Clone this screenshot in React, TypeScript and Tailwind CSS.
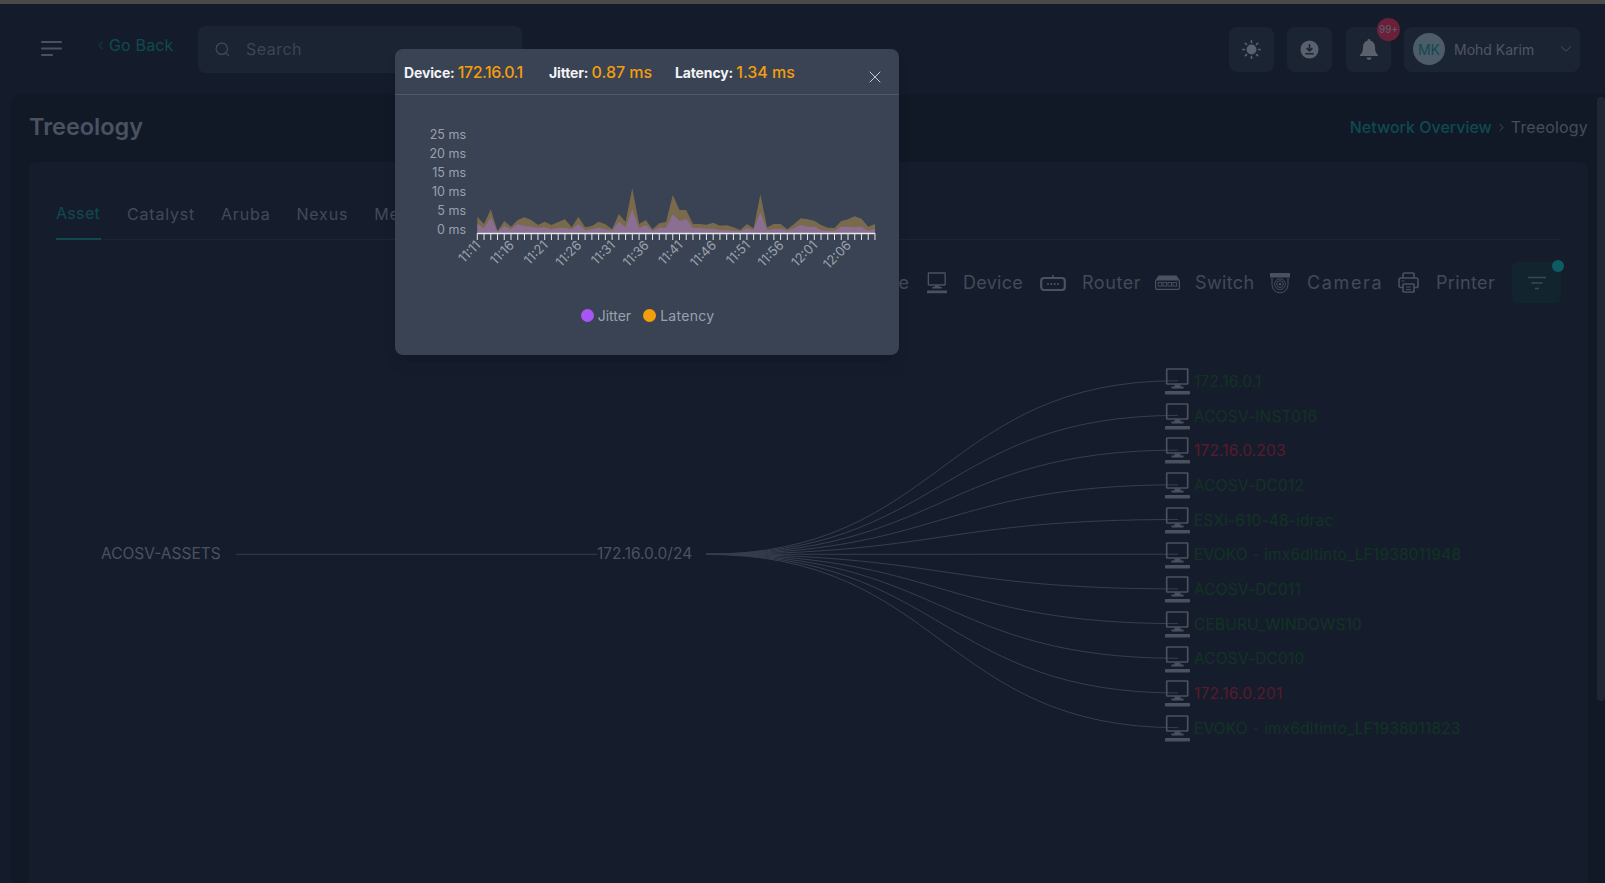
import { ChevronDown, ChevronLeft, ChevronRight, Search, X } from "lucide-react";

const latencyTops = [140,162,118,183,153,170,150,142,150,165,155,165,156,148,172,140,172,168,155,163,178,132,155,55,162,150,178,160,156,75,120,120,162,162,164,158,167,166,172,180,162,175,73,172,162,162,178,162,145,148,152,165,173,174,153,148,139,146,170,162];
const jitterTops = [162,175,142,185,168,178,162,168,170,173,172,178,174,174,178,163,180,178,173,178,182,155,172,118,175,165,182,173,173,133,153,146,174,174,176,176,180,180,182,184,175,180,127,180,177,176,182,175,165,170,170,180,182,182,170,170,172,170,182,176];

const X0 = 82.3;
const STEP = 6.74;
const BASE = 138;
const toY = (v: number) => 75 + v / 3;
const area = (tops: number[]) =>
  `M${X0},${BASE} ` + tops.map((v, i) => `L${(X0 + i * STEP).toFixed(1)},${toY(v).toFixed(1)}`).join(" ") + ` L${(X0 + 59 * STEP).toFixed(1)},${BASE} Z`;

const timeLabels = ["11:11","11:16","11:21","11:26","11:31","11:36","11:41","11:46","11:51","11:56","12:01","12:06"];
const yLabels = [["25 ms",39],["20 ms",58],["15 ms",77],["10 ms",96],["5 ms",115],["0 ms",134.5]] as const;

const nodes = [
  ["172.16.0.1","g"],["ACOSV-INST016","g"],["172.16.0.203","r"],["ACOSV-DC012","g"],["ESXi-610-48-idrac","g"],
  ["EVOKO - imx6dltinto_LF1938011948","g"],["ACOSV-DC011","g"],["CEBURU_WINDOWS10","g"],["ACOSV-DC010","g"],["172.16.0.201","r"],["EVOKO - imx6dltinto_LF1938011823","g"],
] as const;

const FONT = "font-['Inter','Liberation_Sans',sans-serif]";

function Monitor({ width = 25, height = 27 }: { width?: number; height?: number }) {
  return (
    <svg viewBox="0 0 25 27" width={width} height={height} fill="none">
      <rect x="1.7" y="1" width="21" height="15" rx="0.5" stroke="#4a515f" strokeWidth="1.7" />
      <path d="M9.5 16.5h6v2h3v2h-12v-2h3z" fill="#4a515f" />
      <rect x="0" y="23" width="25" height="3.4" rx="0.6" fill="#4a515f" />
    </svg>
  );
}

function RouterIcon() {
  return (
    <svg viewBox="0 0 26 16" width="26" height="16" fill="none">
      <path d="M13 0v3" stroke="#4a515f" strokeWidth="1.6" />
      <rect x="1.2" y="3" width="23.6" height="12" rx="3" stroke="#4a515f" strokeWidth="2.2" />
      <g fill="#4a515f"><circle cx="8" cy="9" r="1.1" /><circle cx="11.3" cy="9" r="1.1" /><circle cx="14.7" cy="9" r="1.1" /><circle cx="18" cy="9" r="1.1" /></g>
    </svg>
  );
}

function SwitchIcon() {
  return (
    <svg viewBox="0 0 25 15" width="25" height="15" fill="none">
      <path d="M3.5 0.5h18l3 4.5H.5z" fill="#4a515f" />
      <rect x="0.6" y="5" width="23.8" height="9.4" rx="1.4" stroke="#4a515f" strokeWidth="1.2" />
      <g stroke="#4a515f" strokeWidth="0.9"><rect x="3.2" y="7.5" width="3.6" height="3.6" /><rect x="8" y="7.5" width="3.6" height="3.6" /><rect x="13" y="7.5" width="3.6" height="3.6" /><rect x="18" y="7.5" width="3.6" height="3.6" /></g>
    </svg>
  );
}

function CameraIcon() {
  return (
    <svg viewBox="0 0 20 20" width="20" height="20" fill="none">
      <rect x="0" y="0" width="20" height="4.6" rx="0.6" fill="#4a515f" />
      <path d="M2 5v6.5a8 8.3 0 0 0 16 0V5" stroke="#4a515f" strokeWidth="1" />
      <circle cx="10" cy="11.2" r="5.4" stroke="#4a515f" strokeWidth="0.9" />
      <circle cx="10" cy="11.2" r="3.4" stroke="#4a515f" strokeWidth="0.9" />
      <circle cx="10" cy="11.2" r="1.3" fill="#4a515f" />
    </svg>
  );
}

function PrinterIcon() {
  return (
    <svg viewBox="0 0 21 21" width="21" height="21" fill="none" stroke="#4a515f" strokeWidth="1.6">
      <path d="M5 6V2.2A1.2 1.2 0 0 1 6.2 1h8.6A1.2 1.2 0 0 1 16 2.2V6" />
      <path d="M5 15.5H2.8A1.8 1.8 0 0 1 1 13.7V7.8A1.8 1.8 0 0 1 2.8 6h15.4A1.8 1.8 0 0 1 20 7.8v5.9a1.8 1.8 0 0 1-1.8 1.8H16" />
      <rect x="5" y="12" width="11" height="8" rx="0.8" />
      <path d="M8 15h5M8 17.5h5M3.5 9h3" strokeWidth="1.1" />
    </svg>
  );
}

function LegendItem({ label, icon, labelClass }: { label: string; icon: React.ReactNode; labelClass: string }) {
  return (
    <div className="flex items-center">
      {icon}
      <span className={`text-[18px] text-[#434a58] ${labelClass}`}>{label}</span>
    </div>
  );
}

export default function App() {
  const sx = 706, ex = 1178, sy = 554.3;
  return (
    <div className={`relative flex flex-col h-[883px] w-[1605px] overflow-hidden bg-[#141c2b] ${FONT}`}>
      <div className="h-1 shrink-0 bg-[#4a4a4a]" />

      <header className="flex h-[90px] shrink-0 items-center">
        <svg viewBox="0 0 21 16" width="21" height="16" className="ml-[41px]" fill="none" stroke="#4a515f" strokeWidth="2" strokeLinecap="round">
          <path d="M1 1h19M1 7.5h19M1 14h10" />
        </svg>
        <div className="ml-[32px] mb-2 flex w-[104px] items-center text-[16px] text-[#0f4a50] tracking-[0.01em]">
          <ChevronLeft size={13} strokeWidth={1.8} className="mr-[2px]" />
          Go Back
        </div>
        <div className="flex h-[47px] w-[324px] items-center rounded-lg bg-[#1b2433] pl-4">
          <Search size={17} strokeWidth={1.7} className="text-[#434a58]" />
          <span className="ml-[15px] text-[16px] text-[#3d4553] tracking-[0.03em]">Search</span>
        </div>

        <div className="ml-auto mr-[25px] flex items-center">
          <button className="flex h-[45px] w-[45px] items-center justify-center rounded-lg bg-[#1b2433]">
            <svg viewBox="0 0 20 20" width="19" height="19" fill="#5a606c">
              <circle cx="10" cy="10" r="5.2" />
              <g stroke="#5a606c" strokeWidth="1.8" strokeLinecap="round">
                <path d="M10 .9v1.6M10 17.5v1.6M.9 10h1.6M17.5 10h1.6M3.6 3.6l1.1 1.1M15.3 15.3l1.1 1.1M3.6 16.4l1.1-1.1M15.3 4.7l1.1-1.1" />
              </g>
            </svg>
          </button>
          <button className="ml-[13px] flex h-[45px] w-[45px] items-center justify-center rounded-lg bg-[#1b2433]">
            <svg viewBox="0 0 20 20" width="19" height="19">
              <circle cx="10" cy="10" r="9.5" fill="#5a606c" />
              <path d="M10 4.5v6.5M7 8.5l3 3 3-3M5.5 14.5h9" stroke="#1b2433" strokeWidth="1.7" fill="none" />
            </svg>
          </button>
          <div className="relative ml-[14px] flex h-[45px] w-[45px] items-center justify-center rounded-lg bg-[#1b2433]">
            <svg viewBox="0 0 18 21" width="18" height="21" fill="#5a606c">
              <path d="M9 0a1.5 1.5 0 0 1 1.5 1.7C13.4 2.4 15 4.9 15 8c0 4 .8 6 3 8v1H0v-1c2.2-2 3-4 3-8 0-3.1 1.6-5.6 4.5-6.3A1.5 1.5 0 0 1 9 0z" />
              <path d="M6.5 18.5h5a2.5 2.5 0 0 1-5 0z" />
            </svg>
            <span className="absolute -top-[9px] -right-[9px] flex h-[23px] w-[23px] items-center justify-center rounded-full bg-[#6a2038] text-[10px] text-[#5b6372]">99+</span>
          </div>
          <div className="ml-[13px] flex h-[45px] w-[176px] items-center rounded-lg bg-[#1b2433] pl-[9px]">
            <div className="flex h-8 w-8 items-center justify-center rounded-full bg-[#4d5c68] text-[14px] text-[#0f4a50]">MK</div>
            <span className="ml-[9px] w-[103px] text-[14px] text-[#4f5665]">Mohd Karim</span>
            <ChevronDown size={18} strokeWidth={1.3} className="text-[#4a515f]" />
          </div>
        </div>
      </header>

      <div className="flex min-h-0 flex-1 pl-[11px]">
        <main className="flex min-w-0 flex-1 flex-col rounded-tl-xl bg-[#111927] pl-[18px] pr-[9px]">
          <div className="flex h-[68px] shrink-0 items-center justify-between pb-[2px]">
            <h1 className="text-[23.5px] font-semibold text-[#4a5261]">Treeology</h1>
            <div className="flex items-center text-[16px] font-medium">
              <span className="text-[#0f4a50]">Network Overview</span>
              <ChevronRight size={13} strokeWidth={1.6} className="mx-[3px] text-[#4a515f]" />
              <span className="font-normal tracking-[0.01em] text-[#464d5b]">Treeology</span>
            </div>
          </div>

          <section className="flex min-h-0 flex-1 flex-col rounded-t-lg bg-[#151d2c] px-[27px] pt-[39px]">
            <nav className="flex h-[39px] shrink-0 gap-[26px] border-b border-[#1b2433] text-[16px] tracking-[0.05em] text-[#434a58]">
              <span className="h-[39px] w-[45px] border-b-2 border-[#0f4a50] text-[#0f4a50] tracking-[0.02em]">Asset</span>
              <span className="pt-[1px]">Catalyst</span>
              <span className="pt-[1px]">Aruba</span>
              <span className="pt-[1px]">Nexus</span>
              <span className="pt-[1px]">Meraki</span>
            </nav>

            <div className="mt-[22px] flex h-[41px] shrink-0 items-center justify-end">
              <span className="mr-[18px] text-[18px] text-[#434a58]">Node</span>
              <LegendItem label="Device" labelClass="ml-4 w-[61px] tracking-[0.015em]" icon={<Monitor width={20} height={22} />} />
              <div className="ml-4"><LegendItem label="Router" labelClass="ml-4 w-[58px] tracking-[0.03em]" icon={<RouterIcon />} /></div>
              <div className="ml-[15px]"><LegendItem label="Switch" labelClass="ml-[15px] w-[58px] tracking-[0.02em]" icon={<SwitchIcon />} /></div>
              <div className="ml-[17px]"><LegendItem label="Camera" labelClass="ml-[17px] w-[75px] tracking-[0.09em]" icon={<CameraIcon />} /></div>
              <div className="ml-4"><LegendItem label="Printer" labelClass="ml-[17px] w-[57px] tracking-[0.02em]" icon={<PrinterIcon />} /></div>
              <div className="relative ml-[19px] flex h-[41px] w-[49px] items-center justify-center rounded-md bg-[#12242e]">
                <svg viewBox="0 0 18 14" width="18" height="14" fill="none" stroke="#3a4a52" strokeWidth="1.6">
                  <path d="M0 1.5h18M3.5 7h11M7 12.5h4" />
                </svg>
                <span className="absolute -top-[2px] -right-[3px] h-[12px] w-[12px] rounded-full bg-[#0e5c63]" />
              </div>
            </div>

            <div className="relative -mx-[27px] flex-1">
              <svg className="absolute left-0 top-0" width="1560" height="580" viewBox="29 303 1560 580" fill="none" stroke="#373e4d" strokeWidth="1">
                <path d={`M236 ${sy}H597`} />
                {nodes.map((_, i) => {
                  const y = 380.7 + i * 34.7;
                  const m = (sx + ex) / 2;
                  return <path key={i} d={`M${sx} ${sy}C${m} ${sy} ${m} ${y} ${ex} ${y}`} />;
                })}
              </svg>
              <span className="absolute left-[72px] top-[240px] text-[15.5px] leading-[22px] text-[#4a5261]">ACOSV-ASSETS</span>
              <span className="absolute left-[568px] top-[240px] text-[15.5px] leading-[22px] text-[#4a5261]">172.16.0.0/24</span>
              {nodes.map(([name, status], i) => (
                <div key={name} className="absolute left-[1136px] flex items-center" style={{ top: 65 + i * 34.7 }}>
                  <Monitor />
                  <span className={`ml-[4px] whitespace-nowrap text-[15.5px] tracking-[0.01em] ${status === "g" ? "text-[#123324]" : "text-[#5a1a2b]"}`}>{name}</span>
                </div>
              ))}
            </div>
          </section>
        </main>
        <aside className="flex w-2 shrink-0 flex-col bg-[#111927] pt-[3px]">
          <div className="h-[604px] w-2 shrink-0 rounded-full bg-[#1f2735]" />
        </aside>
      </div>

      <div className="absolute left-[395px] top-[49px] flex h-[306px] w-[504px] flex-col rounded-lg bg-[#394353] shadow-lg">
        <div className="flex h-[46px] shrink-0 items-center border-b border-[#4f5868] pl-[9px]">
          <div className="w-[145px] whitespace-nowrap text-[14px] font-bold tracking-[-0.01em] text-[#f3f4f6]">Device: <span className="text-[16px] font-medium tracking-[-0.03em] text-[#f59e0b]">172.16.0.1</span></div>
          <div className="w-[126px] whitespace-nowrap text-[14px] font-bold tracking-[-0.01em] text-[#f3f4f6]">Jitter: <span className="text-[16px] font-medium tracking-normal text-[#f59e0b]">0.87 ms</span></div>
          <div className="whitespace-nowrap text-[14px] font-bold tracking-[-0.01em] text-[#f3f4f6]">Latency: <span className="text-[16px] font-medium tracking-normal text-[#f59e0b]">1.34 ms</span></div>
          <X size={20} strokeWidth={1.2} className="ml-auto mr-[14px] mt-[10px] text-[#c4c9d1]" />
        </div>
        <svg width="504" height="210" viewBox="0 0 504 210" className="block shrink-0">
          <path d={area(latencyTops)} fill="#7a6a4c" />
          <path d={area(jitterTops)} fill="#8a6f92" />
          <path d={`M${X0} ${BASE + 0.5}H${X0 + 59 * STEP}`} stroke="#e5e7eb" strokeWidth="1.4" />
          {latencyTops.map((_, i) => (
            <path key={i} d={`M${X0 + i * STEP} ${BASE}v7`} stroke="#e5e7eb" strokeWidth="1" />
          ))}
          {yLabels.map(([t, y]) => (
            <text key={t} x="71" y={y + 4.5} textAnchor="end" fontSize="12.5" fill="#9aa1ad">{t}</text>
          ))}
          {timeLabels.map((t, i) => {
            const x = X0 + i * 5 * STEP + 4;
            return (
              <text key={t} x={x} y={151} textAnchor="end" fontSize="13" fill="#9aa1ad" transform={`rotate(-45 ${x} 151)`}>{t}</text>
            );
          })}
        </svg>
        <div className="flex h-5 items-center justify-center pl-[1px] text-[14px] text-[#9aa1ad]">
          <span className="h-[13px] w-[13px] rounded-full bg-[#a855f7]" />
          <span className="ml-[4px]">Jitter</span>
          <span className="ml-[12px] h-[13px] w-[13px] rounded-full bg-[#f59e0b]" />
          <span className="ml-[4px] tracking-[0.02em]">Latency</span>
        </div>
      </div>
    </div>
  );
}
